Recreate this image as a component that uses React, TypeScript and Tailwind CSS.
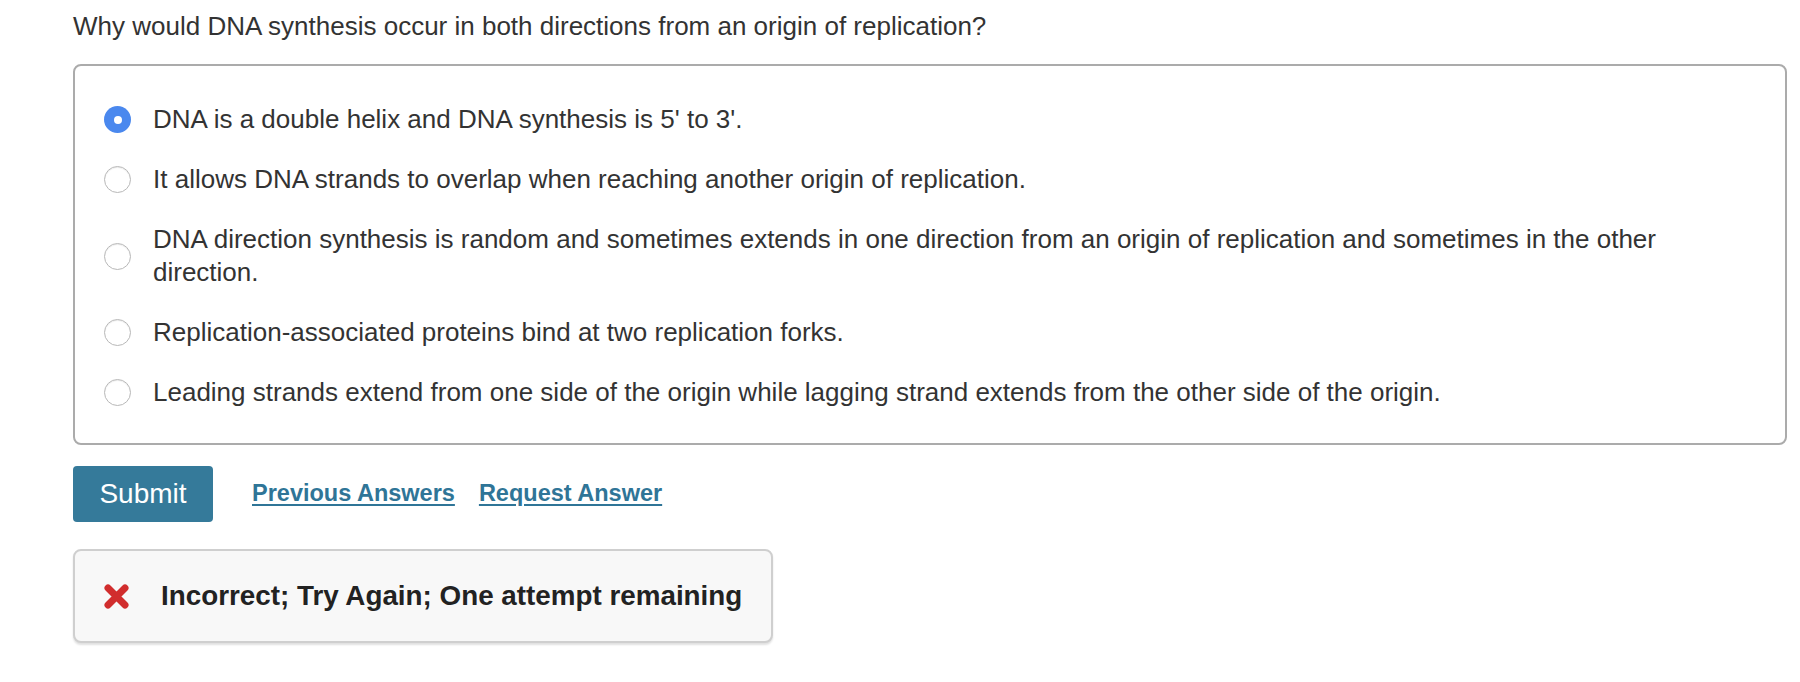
const options = [
  "DNA is a double helix and DNA synthesis is 5' to 3'.",
  "It allows DNA strands to overlap when reaching another origin of replication.",
  "DNA direction synthesis is random and sometimes extends in one direction from an origin of replication and sometimes in the other direction.",
  "Replication-associated proteins bind at two replication forks.",
  "Leading strands extend from one side of the origin while lagging strand extends from the other side of the origin.",
];

function Radio({ checked }: { checked: boolean }) {
  if (checked) {
    return (
      <span className="flex h-[27px] w-[27px] shrink-0 items-center justify-center rounded-full bg-[#4a88ee]">
        <span className="h-[8px] w-[8px] rounded-full bg-white" />
      </span>
    );
  }
  return (
    <span className="h-[27px] w-[27px] shrink-0 rounded-full border border-[#b8b8b8] bg-white shadow-[inset_0_1px_1px_rgba(0,0,0,0.08)]" />
  );
}

export default function App() {
  return (
    <div
      className="min-h-[682px] bg-white pl-[73px] pr-[13px] text-[#333]"
      style={{ fontFamily: '"Liberation Sans", Arial, Helvetica, sans-serif' }}
    >
      <p className="pt-[10px] text-[26px] leading-[33px]">
        Why would DNA synthesis occur in both directions from an origin of replication?
      </p>

      <div className="mt-[21px] rounded-[8px] border-2 border-[#ababab] pb-[34px] pl-[29px] pr-[30px] pt-[37px]">
        <div className="flex flex-col gap-[27px]">
          {options.map((opt, i) => (
            <label key={i} className="flex items-center gap-[22px]">
              <Radio checked={i === 0} />
              <span className="text-[26px] leading-[33px]">{opt}</span>
            </label>
          ))}
        </div>
      </div>

      <div className="mt-[21px] flex items-center">
        <button className="h-[56px] w-[140px] rounded-[4px] bg-[#357a9a] text-[28px] text-white">
          Submit
        </button>
        <a className="ml-[39px] text-[23.5px] font-bold text-[#2f7597] underline underline-offset-[3px]">
          Previous Answers
        </a>
        <a className="ml-[24px] text-[23.5px] font-bold text-[#2f7597] underline underline-offset-[3px]">
          Request Answer
        </a>
      </div>

      <div className="mt-[27px] flex h-[94px] w-[700px] items-center rounded-[8px] border-2 border-[#cfcfcf] bg-[#f8f8f8] pl-[28px] shadow-[0_2px_2px_rgba(0,0,0,0.12)]">
        <svg width="27" height="27" viewBox="0 0 27 27" className="shrink-0">
          <path
            d="M5 5 L22 22 M22 5 L5 22"
            stroke="#d12d2d"
            strokeWidth="7"
            strokeLinecap="round"
          />
        </svg>
        <span className="ml-[31px] text-[27.8px] font-bold text-[#222]">
          Incorrect; Try Again; One attempt remaining
        </span>
      </div>
    </div>
  );
}
